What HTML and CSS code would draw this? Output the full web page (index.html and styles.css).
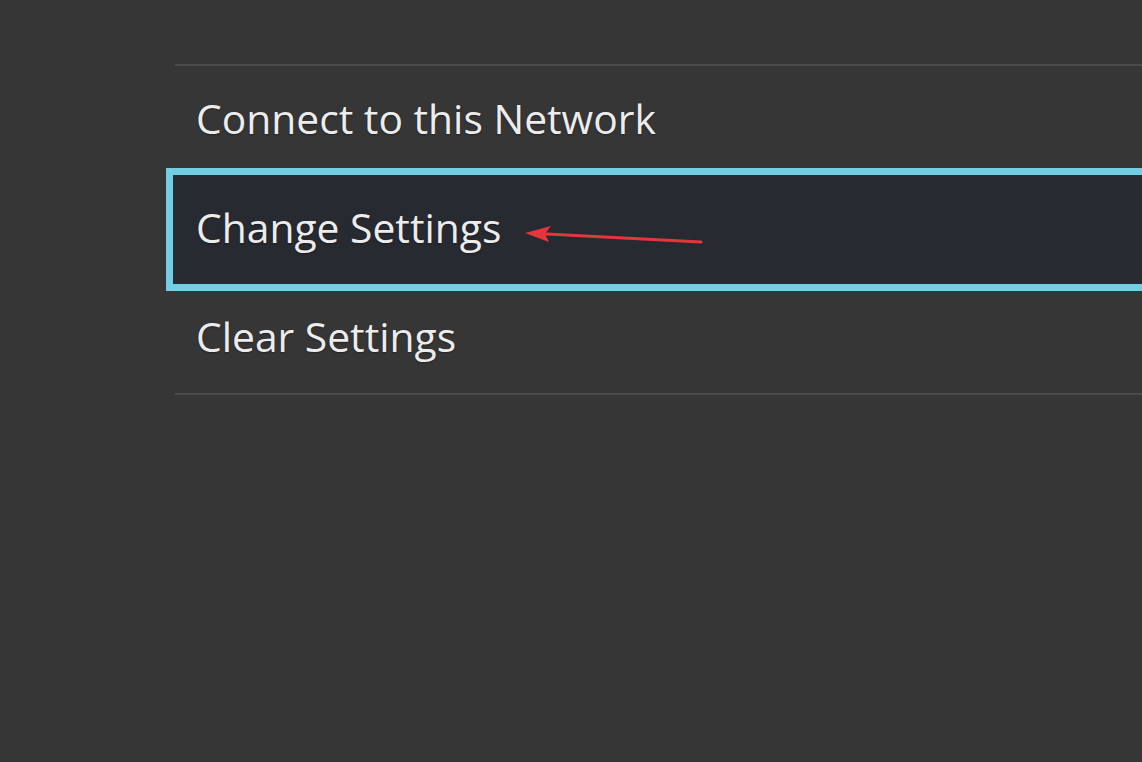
FILE: index.html
```html
<!DOCTYPE html>
<html>
<head>
<meta charset="utf-8">
<link rel="stylesheet" href="styles.css">
</head>
<body>
<div class="screen">
  <ul class="menu">
    <li class="item">Connect to this Network</li>
    <li class="item selected">Change Settings
      <svg class="arrow" width="190" height="24" viewBox="0 0 190 24">
        <line x1="176" y1="16" x2="12" y2="7.5" stroke="#e5373b" stroke-width="3.2" stroke-linecap="round"/>
        <polygon points="0,7 26,0 20,8 24,16" fill="#e5373b"/>
      </svg>
    </li>
    <li class="item">Clear Settings</li>
  </ul>
</div>
</body>
</html>
```
FILE: styles.css
```css
html, body {
  margin: 0;
  padding: 0;
  background: #363636;
  overflow: hidden;
}
.screen {
  width: 1142px;
  height: 762px;
  padding-top: 64px;
  box-sizing: border-box;
  background: #363636;
  font-family: "Open Sans", "Noto Sans", sans-serif;
}
.menu {
  list-style: none;
  margin: 0 0 0 175px;
  padding: 0;
  border-top: 2px solid #4a4a4a;
  border-bottom: 2px solid #4a4a4a;
}
.item {
  position: relative;
  height: 109px;
  box-sizing: border-box;
  display: flex;
  align-items: center;
  padding-left: 21px;
  padding-bottom: 6px;
  font-size: 40.8px;
  color: #ececec;
  text-shadow: 0 1px 2px rgba(0,0,0,0.35);
}
.item.selected {
  background: #272a30;
  z-index: 1;
}
.item.selected::before {
  content: "";
  position: absolute;
  left: -9px;
  right: -40px;
  top: -7px;
  bottom: -7px;
  background: #272a30;
  border: 7px solid #72cee0;
  box-shadow: inset 0 0 0 1px #1b3042;
  box-sizing: border-box;
  z-index: -1;
}
.arrow {
  position: absolute;
  left: 350px;
  top: 51px;
}
```
